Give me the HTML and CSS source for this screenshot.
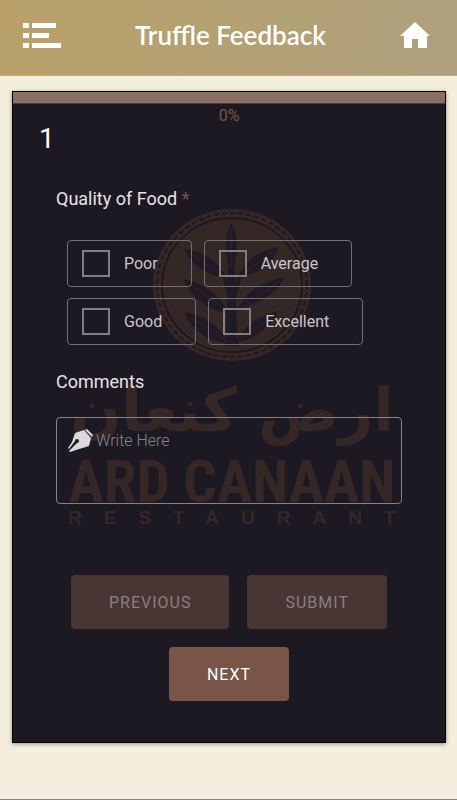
FILE: index.html
```html
<!DOCTYPE html>
<html lang="en">

<head>
  <meta charset="UTF-8">
  <meta name="viewport" content="width=device-width, initial-scale=1.0">
  <title>Truffle Feedback</title>
  <link rel="stylesheet" href="styles.css">
</head>

<body>

  <header class="topbar">
    <button type="button" class="icon-btn" aria-label="Menu">
      <svg width="38" height="25" viewBox="0 0 38 25" fill="#fff">
        <path d="M0 0h6v5H0zM9 0h24v5H9zM0 10h6v5H0zM9 10h17v5H9zM0 20h6v5H0zM9 20h29v5H9z"/>
      </svg>
    </button>
    <h1>Truffle Feedback</h1>
    <a href="#" class="icon-btn" aria-label="Home">
      <svg width="30" height="26" viewBox="0 0 30 26" fill="#fff">
        <path d="M15 0L30 14h-3v12h-9v-9h-6v9H4V14H0z"/>
      </svg>
    </a>
  </header>

  <main class="card">
    <!-- Restaurant logo behind the form -->
    <svg class="watermark" viewBox="0 0 432 650" aria-hidden="true">
      <ellipse cx="219" cy="193" rx="79" ry="76" fill="#352725"/>
      <ellipse cx="219" cy="193" rx="75" ry="72" fill="none" stroke="#1d1922" stroke-width="2" stroke-dasharray="5 3"/>
      <ellipse cx="219" cy="193" rx="70" ry="67" fill="none" stroke="#1d1922" stroke-width="2"/>
      <g fill="#1f1a23">
        <path d="M215 174h7l2 72 3 8h-17l3-8z"/>
        <path d="M218 131q-6 14-5 26 1 14 5 24 6-12 6-26 0-12-6-24z"/>
        <path d="M171 157q18 2 28 11 9 7 15 18-16-2-27-10-10-7-16-19z"/>
        <path d="M170 187q18 3 31 15 10 8 14 19-17-2-28-12-11-8-17-22z"/>
        <path d="M171 220q18 3 29 12 11 9 15 20-17-3-27-10-11-8-17-22z"/>
        <path d="M266 155q-6 14-16 21-11 7-26 11 6-15 16-22 11-7 26-10z"/>
        <path d="M272 185q-8 14-20 21-13 7-29 14 7-16 20-24 14-8 29-11z"/>
        <path d="M266 219q-8 14-18 21-11 8-25 11 6-14 17-21 12-8 26-11z"/>
        <path d="M208 179l11 15 11-15-6 24h-10z"/>
      </g>
      <path d="M218 135v40M177 162l35 22M177 192l37 26M177 225l37 25M261 159l-35 26M267 189l-42 30M262 223l-37 26" fill="none" stroke="#30262a" stroke-width="1"/>
      <text class="logo-arabic" x="219" y="339">ارض كنعان</text>
      <text class="logo-name" x="219" y="410">ARD CANAAN</text>
      <text class="logo-sub" x="55" y="432">RESTAURANT</text>
    </svg>

    <progress class="progress" value="0" max="100" aria-label="Progress"></progress>
    <p class="percent">0%</p>
    <p class="step">1</p>

    <form class="feedback">
      <fieldset class="question">
        <legend>Quality of Food <span class="required">*</span></legend>
        <div class="options">
          <label class="option"><input type="checkbox" name="quality" value="poor">Poor</label>
          <label class="option"><input type="checkbox" name="quality" value="average">Average</label>
          <label class="option"><input type="checkbox" name="quality" value="good">Good</label>
          <label class="option"><input type="checkbox" name="quality" value="excellent">Excellent</label>
        </div>
      </fieldset>

      <label class="comments-label" for="comments">Comments</label>
      <div class="comments-box">
        <svg width="26" height="24" viewBox="0 0 26 24" fill="#dad8da">
          <path d="M7 4l9-3 7 8-2 8-13 4-6 2-1-1 8-8a2 2 0 1 0-2-2L1 20l-1-1 4-6z"/>
          <path d="M17 1l2-1 6 6-1 2z"/>
        </svg>
        <textarea id="comments" placeholder="Write Here"></textarea>
      </div>

      <div class="actions">
        <button type="button" class="btn" disabled>PREVIOUS</button>
        <button type="submit" class="btn" disabled>SUBMIT</button>
        <button type="button" class="btn">NEXT</button>
      </div>
    </form>
  </main>

</body>

</html>
```

FILE: styles.css
```css
* {
  margin: 0;
  padding: 0;
  box-sizing: border-box;
}

body {
  min-height: 100vh;
  background: #f4eede;
  border-bottom: 1px solid #858585;
  font-family: Roboto, sans-serif;
  color: #e6e4e6;
}

/* Top bar */
.topbar {
  display: flex;
  justify-content: space-between;
  align-items: center;
  height: 76px;
  padding: 0 27px 5px 23px;
  background: linear-gradient(100deg, #b8a068, #b3a175 60%, #ae9f7e);
  border-bottom: 1px solid #c2aa80;
}

.topbar h1 {
  font-family: Lato, sans-serif;
  font-size: 26px;
  font-weight: 600;
  color: #fff;
}

.icon-btn {
  display: flex;
  background: none;
  border: none;
  cursor: pointer;
}

/* Card */
.card {
  position: relative;
  margin: 15px 11px 0 12px;
  padding-bottom: 41px;
  background: #1d1922;
  border: 1px solid #000;
  box-shadow: 0 1px 4px rgba(0, 0, 0, 0.4);
}

.watermark {
  position: absolute;
  top: 0;
  left: 0;
  width: 100%;
  fill: #352725;
}

.logo-arabic {
  font-family: "DejaVu Sans", sans-serif;
  font-size: 60px;
  font-weight: bold;
  text-anchor: middle;
}

.logo-name {
  font-family: "Liberation Sans Narrow", "Roboto Condensed", "Liberation Serif", serif;
  font-size: 59px;
  font-weight: bold;
  text-anchor: middle;
}

.logo-sub {
  font-family: "Liberation Sans", sans-serif;
  font-size: 19px;
  font-weight: bold;
  letter-spacing: 22px;
}

.progress,
.percent,
.step,
.feedback {
  position: relative;
}

.progress {
  display: block;
  width: 100%;
  height: 12px;
  appearance: none;
  border: none;
  border-bottom: 1px solid #4b3d3d;
}

.progress::-webkit-progress-bar {
  background: #8b6e63;
}

.progress::-webkit-progress-value {
  background: #795548;
}

.percent {
  text-align: center;
  font-size: 16px;
  line-height: 24px;
  color: #795548;
}

.step {
  padding-left: 26px;
  font-size: 28px;
  line-height: 22px;
  color: #fff;
}

/* Form */
.feedback {
  padding: 37px 43px 0;
}

.question {
  border: none;
}

.question legend,
.comments-label {
  display: block;
  font-size: 18px;
  line-height: 24px;
}

.required {
  color: #795548;
}

.options {
  display: flex;
  flex-wrap: wrap;
  gap: 11px 12px;
  padding: 29px 0 25px 11px;
}

.option {
  display: flex;
  align-items: center;
  gap: 14px;
  height: 47px;
  padding: 0 33px 0 14px;
  border: 1px solid #717074;
  border-radius: 4px;
  font-size: 16px;
  color: #c9c7c9;
}

.option input {
  width: 28px;
  height: 27px;
  appearance: none;
  border: 2px solid #808080;
}

.option input:checked {
  background: #795548;
}

.comments-box {
  display: flex;
  gap: 2px;
  height: 87px;
  margin-top: 23px;
  padding: 11px;
  border: 1px solid #858387;
  border-radius: 4px;
}

.comments-box svg {
  flex-shrink: 0;
}

.comments-box textarea {
  flex: 1;
  min-width: 0;
  background: none;
  border: none;
  outline: none;
  resize: none;
  font-family: Roboto, sans-serif;
  font-size: 16px;
  font-weight: 300;
  line-height: 24px;
  color: #e6e4e6;
}

.comments-box textarea::placeholder {
  color: #88868a;
}

/* Buttons */
.actions {
  display: flex;
  flex-wrap: wrap;
  justify-content: center;
  gap: 18px;
  padding-top: 71px;
}

.btn {
  height: 54px;
  padding: 0 38px;
  background: #795548;
  border: none;
  border-radius: 4px;
  font-family: Roboto, sans-serif;
  font-size: 16px;
  font-weight: 400;
  letter-spacing: 1px;
  color: #fff;
  cursor: pointer;
}

.btn:disabled {
  background: #4a3535;
  color: #878084;
  cursor: default;
}
```
